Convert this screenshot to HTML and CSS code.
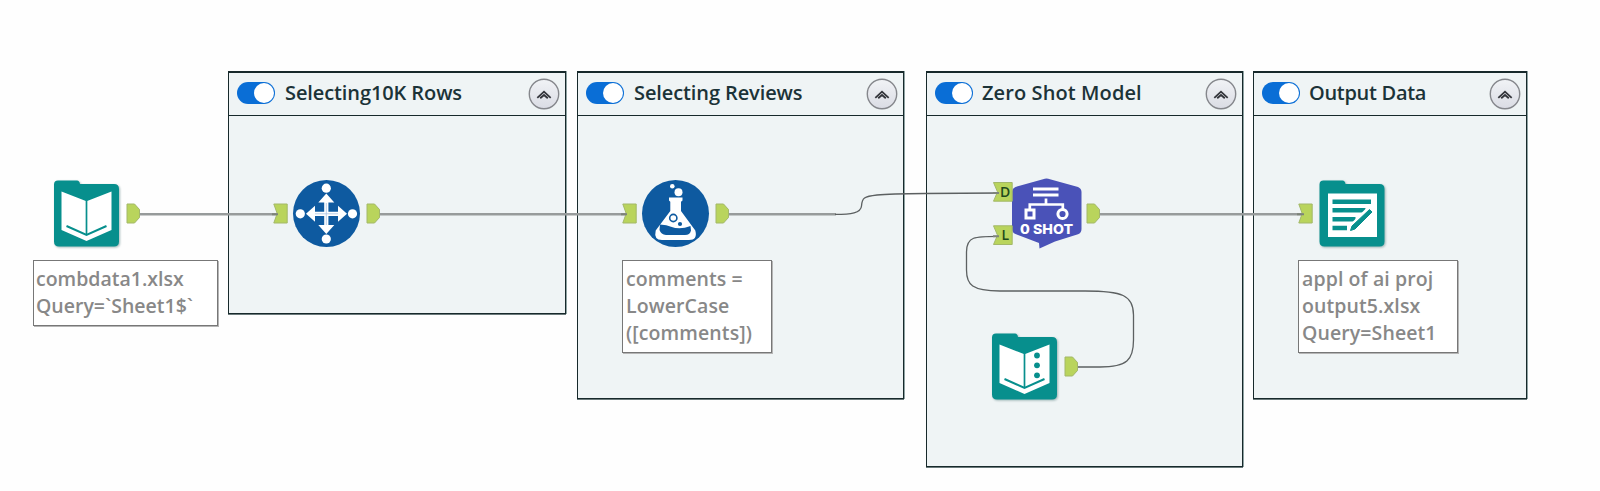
FILE: index.html
```html
<!DOCTYPE html>
<html lang="en">
<head>
<meta charset="utf-8">
<title>Workflow</title>
<link rel="stylesheet" href="styles.css">
</head>
<body>
<svg class="defs" width="0" height="0">
  <defs>
    <linearGradient id="btn" x1="0" y1="0" x2="0" y2="1">
      <stop offset="0" stop-color="#f1f3f6"/><stop offset="1" stop-color="#dadce4"/>
    </linearGradient>
    <symbol id="collapse" viewBox="0 0 32 32">
      <circle cx="16" cy="16" r="14.7" fill="url(#btn)" stroke="#85878c" stroke-width="1.4"/>
      <path d="M9.300 19.800 16 13.700l6.700 6.100M12.200 20.300 16 17l3.800 3.300" fill="none" stroke="#33353b" stroke-width="1.800"/>
    </symbol>
    <symbol id="out" viewBox="0 0 15 21">
      <path d="M1 1h7.500l5 5.500v8l-5 5.500H1z" fill="#b9d45c" stroke="#a3b869" stroke-width="1"/>
    </symbol>
    <symbol id="in" viewBox="0 0 15 21">
      <path d="M.8 1h13.400v19H.8l3.400-9.500z" fill="#b9d45c" stroke="#a3b869" stroke-width="1"/>
    </symbol>
    <symbol id="folder" viewBox="0 0 68 68">
      <path d="M5 1h19q2.500 0 3 3.500h34q5 0 5 5V62q0 5-5 5H6q-5 0-5-5V5q0-4 4-4z" fill="#078f8d"/>
    </symbol>
    <symbol id="book" viewBox="0 0 68 68">
      <use href="#folder"/>
      <path d="M8.500 12 33.500 21.800 58.500 12v38.500L33.500 61.500 8.500 50.500z" fill="#fff"/>
      <path d="M33.500 21v34" stroke="#078f8d" stroke-width="1.700"/>
      <path d="M13.500 46.500 33.500 55.500 53.500 46.500" fill="none" stroke="#078f8d" stroke-width="2"/>
    </symbol>
  </defs>
</svg>

<main class="canvas">
  <section class="group g1">
    <header class="bar"><span class="toggle"></span><h2 class="title t1">Selecting10K Rows</h2><svg class="collapse"><use href="#collapse"/></svg></header>
  </section>
  <section class="group g2">
    <header class="bar"><span class="toggle"></span><h2 class="title t2">Selecting Reviews</h2><svg class="collapse"><use href="#collapse"/></svg></header>
  </section>
  <section class="group g3">
    <header class="bar"><span class="toggle"></span><h2 class="title t3">Zero Shot Model</h2><svg class="collapse"><use href="#collapse"/></svg></header>
  </section>
  <section class="group g4">
    <header class="bar"><span class="toggle"></span><h2 class="title t4">Output Data</h2><svg class="collapse"><use href="#collapse"/></svg></header>
  </section>

  <svg class="flow" width="1600" height="491" viewBox="0 0 1600 491">
    <g class="wires">
      <path class="thick" d="M139 214.200H279M379 214.200H628M728 214.200H836M1099 214.200H1304"/>
      <path d="M835 214.300C851 214.300 861 213 861.500 206C862 198 864 196.500 877 195C888 193.800 900 193.600 925 193.500L1000 193"/>
      <path d="M1000 236.300C975 236.300 966.500 236 966.500 252V270C966.500 285 972 290.500 1000 291H1085C1122 291 1133.500 295 1133.500 315V340C1133.500 360 1127 367 1100 367H1077"/>
    </g>

    <use href="#out" x="126" y="203" width="15" height="21"/>
    <use href="#in" x="273" y="203" width="15" height="21"/>
    <use href="#out" x="366" y="203" width="15" height="21"/>
    <use href="#in" x="622" y="203" width="15" height="21"/>
    <use href="#out" x="715" y="203" width="15" height="21"/>
    <use href="#out" x="1086" y="203" width="15" height="21"/>
    <use href="#in" x="1298" y="203" width="15" height="21"/>
    <use href="#out" x="1064" y="356" width="15" height="21"/>
    <path class="stub" d="M272 214.200h6M621 214.200h6M1297 214.200h7"/>

    <use class="tile" href="#book" x="53" y="179.500" width="68" height="68"/>

    <g>
      <circle class="disc" cx="326.500" cy="213.500" r="33.500"/>
      <g fill="#fff">
        <circle cx="326.300" cy="188.200" r="4.600"/><circle cx="326.300" cy="239" r="4.600"/>
        <circle cx="300.300" cy="213.800" r="4.600"/><circle cx="352.500" cy="213.800" r="4.600"/>
        <path d="M326.300 193.500l8 9h-16zM326.300 234l8-9h-16zM306 213.800l9-8v16zM347 213.800l-9-8v16z"/>
      </g>
      <path d="M326.300 200v28M312 213.800h29" stroke="#fff" stroke-width="4.200"/>
      <path d="M326.300 203v22M315 213.800h23" stroke="#a9c4e2" stroke-width=".8"/>
    </g>

    <g>
      <circle class="disc" cx="675.500" cy="213.500" r="33.500"/>
      <circle cx="672.300" cy="186.300" r="2.300" fill="#fff"/><circle cx="678.500" cy="192.200" r="4" fill="#fff"/>
      <path d="M669 197.500h13.500v3l-1.500 1.200V211l14.300 19.500q2.500 9.500-6.300 9.500H662q-8.500 0-6.300-9.500L670.300 211v-9.300l-1.300-1.200z" fill="#fff"/>
      <circle cx="673.300" cy="218" r="3.600" fill="none" stroke="#0e5aa0" stroke-width="1.600"/>
      <circle cx="680" cy="224" r="2.100" fill="#0e5aa0"/>
      <path d="M660 224.500q7 .5 11 2.300 9 3.500 19.500-.8l.5 4.500q-1 4.500-6 4.500h-19q-5-.5-6.500-5z" fill="#0e5aa0"/>
    </g>

    <g>
      <path d="M1043 179.200q3.500-1.500 7 0L1078 187q3.500 1.500 3.500 5v37q0 4-3.500 5.300L1055 241.500l-15.500 7-.5-5.500-23.500-9q-3.500-1.300-3.500-5V192q0-3.500 3.500-5z" fill="#4a52b8"/>
      <g stroke="#fff" fill="none">
        <path d="M1033 189h25.500M1033 195h25.500" stroke-width="3"/>
        <path d="M1046 198.500v6.500M1029.800 210v-5.500h33V210" stroke-width="2.700"/>
        <rect x="1026" y="210" width="8" height="8" stroke-width="3"/>
        <circle cx="1062.500" cy="214" r="4.600" stroke-width="3"/>
      </g>
      <text class="shot" x="1020" y="233.500" textLength="53" lengthAdjust="spacingAndGlyphs">0 SHOT</text>
      <g class="port">
        <path d="M993.500 182.500h18.700v18.700h-18.700l4-9.300zM993.500 225.800h18.700v18.700h-18.700l4-9.300z"/>
        <text x="1000" y="197">D</text><text x="1001.500" y="239.500">L</text>
      </g>
      <path class="stub" d="M993 193h6M993 236.300h6"/>
    </g>

    <g>
      <use class="tile" href="#book" x="991" y="332.500" width="68" height="68"/>
      <circle cx="1037" cy="355.500" r="2.900" fill="#078f8d"/><circle cx="1037" cy="365.300" r="2.900" fill="#078f8d"/><circle cx="1037" cy="375.300" r="2.900" fill="#078f8d"/>
    </g>

    <g>
      <use class="tile" href="#folder" x="1318.500" y="179.500" width="68" height="68"/>
      <path d="M1328 193.500h49v43.500h-49z" fill="#fff"/>
      <path d="M1332.500 201.700h38.500M1332.500 210.300h33M1332.500 219.200h23M1332.500 228h14.500" stroke="#078f8d" stroke-width="4.600"/>
      <path d="M1351 229 1372 208" stroke="#fff" stroke-width="8"/>
      <path d="M1350.500 230.500l1.500-4.500 17.500-16.500 2.500 2.500-17 17z" fill="#078f8d" stroke="#078f8d"/>
    </g>
  </svg>

  <p class="note n1"><span>combdata1.xlsx</span><span>Query=`Sheet1$`</span></p>
  <p class="note n2"><span>comments =</span><span>LowerCase</span><span>([comments])</span></p>
  <p class="note n3"><span>appl of ai proj</span><span>output5.xlsx</span><span>Query=Sheet1</span></p>
</main>
</body>
</html>
```
FILE: styles.css
```css
* { box-sizing: border-box; }
body { margin: 0; background: #fff; font-family: "Open Sans", "Noto Sans", sans-serif; }
.defs { position: absolute; }
.canvas { position: relative; width: 1600px; height: 491px; overflow: hidden; background: #fefefe; }

/* Containers on the canvas */
.group { position: absolute; top: 71px; background: #eff4f5; border: 1px solid #17292b; border-top-width: 2px; box-shadow: 1px 0 0 #8fa3a3, 0 1px 0 #6b7a7b; }
.g1 { left: 228px; width: 338px; height: 243px; }
.g2 { left: 577px; width: 327px; height: 328px; }
.g3 { left: 926px; width: 317px; height: 396px; }
.g4 { left: 1253px; width: 274px; height: 328px; }
.bar { display: flex; align-items: center; height: 43px; padding: 0 5px 1px 8px; border-bottom: 1px solid #17292b; }
.toggle { flex: none; width: 38px; height: 22px; border-radius: 11px; background: #0a6ed6; display: flex; justify-content: flex-end; padding: 1px; margin-top: -2px; }
.toggle::before { content: ""; width: 20px; height: 20px; border-radius: 50%; background: #fff; }
.title { margin: -1px auto 0 10px; font-size: 20px; font-weight: 600; line-height: 28px; white-space: nowrap; color: #1c3338; }
.t1, .t2 { letter-spacing: -.1px; }
.t3 { margin-left: 9px; letter-spacing: .1px; }
.t4 { margin-left: 9px; letter-spacing: -.3px; }
.collapse { flex: none; width: 32px; height: 32px; }

/* Connections and tools */
.flow { position: absolute; left: 0; top: 0; }
.wires path { fill: none; stroke: #5c6061; stroke-width: 1.300; }
.wires .thick { stroke: #979b9b; stroke-width: 2.400; }
.stub { stroke: #7d8479; stroke-width: 2; }
.disc { fill: #0e5aa0; }
.tile { filter: drop-shadow(1px 1px 1px rgba(0, 60, 60, .35)); }
.shot { font: 800 13.500px Inter, sans-serif; fill: #fff; }
.port path { fill: #b9d45c; stroke: #a3b869; }
.port text { font: 600 14px "Open Sans", sans-serif; fill: #1f4a1c; }

/* Annotations */
.note { position: absolute; top: 260px; margin: 0; padding: 4px 2px 0; display: flex; flex-direction: column; align-items: flex-start; background: #fff; border: 1px solid #777; box-shadow: 1px 1px 0 #b5b5b5; font-size: 19.500px; font-weight: 600; line-height: 27.200px; color: #888; white-space: pre; }
.n1 { left: 33px; width: 185px; height: 66px; }
.n2 { left: 622px; width: 150px; height: 93px; padding-left: 3px; letter-spacing: .1px; }
.n3 { left: 1298px; width: 160px; height: 93px; padding-left: 3px; letter-spacing: .1px; }
```
